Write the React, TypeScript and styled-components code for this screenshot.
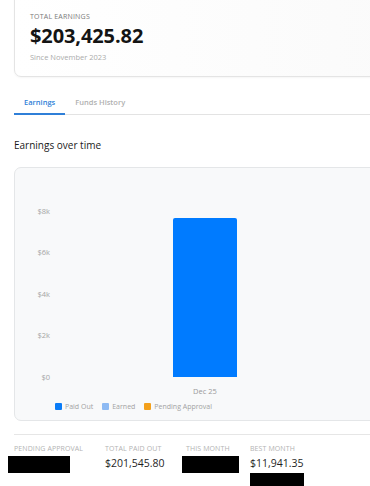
import React from "react";
import styled, { createGlobalStyle } from "styled-components";

const GlobalStyle = createGlobalStyle`
  html, body {
    margin: 0;
    padding: 0;
    background: #ffffff;
    overflow: hidden;
  }
  body {
    font-family: "Open Sans", "Noto Sans", sans-serif;
    color: #1f1f1f;
  }
`;

const Page = styled.main`
  width: 400px;
  padding-left: 14px;
`;

const SummaryCard = styled.section`
  margin-top: -12px;
  padding: 23px 15px 13px;
  border: 1px solid #e4e4e4;
  border-radius: 7px;
  background: linear-gradient(90deg, #ffffff 0%, #fafafa 100%);
  box-shadow: 0 1px 2px rgba(0, 0, 0, 0.04);
`;

const SummaryLabel = styled.div`
  font-size: 7px;
  letter-spacing: 0.2px;
  color: #7a7a7a;
  line-height: 10px;
`;

const SummaryValue = styled.div`
  font-size: 20px;
  font-weight: 700;
  color: #141414;
  line-height: 28px;
  letter-spacing: -0.1px;
`;

const SummaryNote = styled.div`
  font-size: 7.5px;
  color: #ababab;
  line-height: 12px;
  margin-top: 1px;
`;

const Tabs = styled.nav`
  display: flex;
  margin-top: 14px;
  border-bottom: 1px solid #e3e3e3;
`;

const Tab = styled.div<{ $active?: boolean }>`
  padding: 5px 10px 5px;
  font-size: 7.5px;
  font-weight: 600;
  line-height: 12px;
  color: ${(p) => (p.$active ? "#2f7fd8" : "#b0b0b0")};
  border-bottom: 2px solid ${(p) => (p.$active ? "#2f7fd8" : "transparent")};
  margin-bottom: -1px;
`;

const SectionTitle = styled.h2`
  margin: 22px 0 14px;
  font-size: 10px;
  font-weight: 400;
  line-height: 16px;
  color: #1a1a1a;
`;

const ChartCard = styled.section`
  border: 1px solid #e4e6e8;
  border-radius: 7px;
  background: #f8f9fa;
  padding-bottom: 8px;
`;

const ChartSvg = styled.svg`
  display: block;
  font-family: "Open Sans", "Noto Sans", sans-serif;
`;

const Legend = styled.div`
  display: flex;
  gap: 9px;
  padding-left: 40px;
  height: 12px;
  align-items: center;
`;

const LegendItem = styled.div`
  display: flex;
  align-items: center;
  gap: 3px;
  font-size: 7px;
  color: #a2a2a2;
`;

const Swatch = styled.span<{ $color: string }>`
  width: 7px;
  height: 7px;
  border-radius: 1px;
  background: ${(p) => p.$color};
`;

const Divider = styled.hr`
  border: none;
  border-top: 1px solid #e6e6e6;
  margin: 13px 0 0;
`;

const Stats = styled.div`
  display: flex;
  padding-top: 9px;
`;

const Stat = styled.div<{ $width: number }>`
  width: ${(p) => p.$width}px;
  display: flex;
  flex-direction: column;
`;

const StatLabel = styled.div`
  font-size: 7px;
  color: #b3b3b3;
  line-height: 10px;
  letter-spacing: 0.1px;
`;

const StatValue = styled.div`
  font-size: 10.5px;
  color: #1f1f1f;
  line-height: 16px;
  margin-top: 1px;
`;

const Redacted = styled.div<{ $w: number; $shift?: number }>`
  width: ${(p) => p.$w}px;
  height: 17px;
  background: #000;
  margin-top: 2px;
  margin-left: ${(p) => p.$shift ?? 0}px;
`;

const ticks = [
  { label: "$8k", y: 43 },
  { label: "$6k", y: 84 },
  { label: "$4k", y: 126 },
  { label: "$2k", y: 167 },
  { label: "$0", y: 209 },
];

const legend = [
  { label: "Paid Out", color: "#0a7cf7" },
  { label: "Earned", color: "#8dbaf3" },
  { label: "Pending Approval", color: "#f3a01b" },
];

export default function App() {
  return (
    <>
      <GlobalStyle />
      <Page>
        <SummaryCard>
          <SummaryLabel>TOTAL EARNINGS</SummaryLabel>
          <SummaryValue>$203,425.82</SummaryValue>
          <SummaryNote>Since November 2023</SummaryNote>
        </SummaryCard>

        <Tabs>
          <Tab $active>Earnings</Tab>
          <Tab>Funds History</Tab>
        </Tabs>

        <SectionTitle>Earnings over time</SectionTitle>

        <ChartCard>
          <ChartSvg width="380" height="232" viewBox="0 0 380 232">
            {ticks.map((t) => (
              <text
                key={t.label}
                x="35"
                y={t.y + 3}
                textAnchor="end"
                fontSize="7.5"
                fill="#a4a4a4"
              >
                {t.label}
              </text>
            ))}
            <path d="M158 52 Q158 50 160 50 H220 Q222 50 222 52 V209 H158 Z" fill="#007bff" />
            <text x="190" y="226" textAnchor="middle" fontSize="7.5" fill="#9a9a9a">
              Dec 25
            </text>
          </ChartSvg>
          <Legend>
            {legend.map((l) => (
              <LegendItem key={l.label}>
                <Swatch $color={l.color} />
                {l.label}
              </LegendItem>
            ))}
          </Legend>
        </ChartCard>

        <Divider />

        <Stats>
          <Stat $width={91}>
            <StatLabel>PENDING APPROVAL</StatLabel>
            <Redacted $w={62} $shift={-6} />
          </Stat>
          <Stat $width={81}>
            <StatLabel>TOTAL PAID OUT</StatLabel>
            <StatValue>$201,545.80</StatValue>
          </Stat>
          <Stat $width={64}>
            <StatLabel>THIS MONTH</StatLabel>
            <Redacted $w={57} $shift={-4} />
          </Stat>
          <Stat $width={90}>
            <StatLabel>BEST MONTH</StatLabel>
            <StatValue>$11,941.35</StatValue>
            <Redacted $w={54} />
          </Stat>
        </Stats>
      </Page>
    </>
  );
}
